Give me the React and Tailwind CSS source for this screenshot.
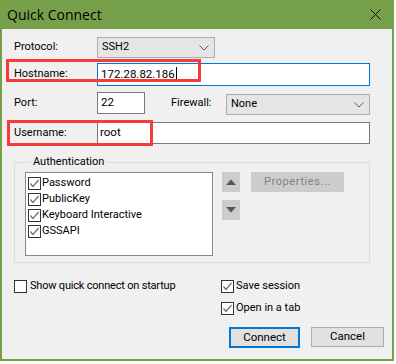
import React from 'react';

const font = { fontFamily: 'Roboto, "Liberation Sans", Arial, sans-serif' };
const titleFont = { fontFamily: '"Open Sans", "Noto Sans", Arial, sans-serif' };

const Chevron = () => (
  <svg width="10" height="6" viewBox="0 0 10 6" className="shrink-0">
    <path d="M0.5 0.5 L5 5 L9.5 0.5" fill="none" stroke="#606060" strokeWidth="1" />
  </svg>
);

const Check = ({ checked }) => (
  <span className="w-[13px] h-[13px] border border-[#333333] bg-white flex items-center justify-center shrink-0">
    {checked && (
      <svg width="11" height="11" viewBox="0 0 11 11">
        <path d="M1.5 5.5 L4 8.5 L9.5 2" fill="none" stroke="#6d6d6d" strokeWidth="1.2" />
      </svg>
    )}
  </span>
);

const Combo = ({ value, className }) => (
  <div className={`h-[21px] bg-[#e5e5e5] border border-[#adadad] flex items-center justify-between pl-[4px] pr-[5px] text-black ${className}`}>
    <span>{value}</span>
    <Chevron />
  </div>
);

const authItems = ['Password', 'PublicKey', 'Keyboard Interactive', 'GSSAPI'];

export default function App() {
  return (
    <div className="w-[396px] h-[364px] bg-white" style={font}>
      <div className="w-[394px] h-[361px] bg-[#77a04b] flex flex-col px-[2px] pb-[2px]">
        <div className="h-[29px] flex items-center justify-between pl-[5px] pr-[11px] text-[14px] text-black" style={titleFont}>
          <span>Quick Connect</span>
          <svg width="11" height="11" viewBox="0 0 11 11">
            <path d="M0.5 0.5 L10.5 10.5 M10.5 0.5 L0.5 10.5" stroke="#111" strokeWidth="1" />
          </svg>
        </div>

        <div className="flex-1 bg-[#f0f0f0] relative text-[11px] text-black">
          {/* red annotation boxes */}
          <div className="absolute left-[4px] top-[30px] w-[195px] h-[23px] border-[3px] border-[#f83a3a] pointer-events-none z-10" />
          <div className="absolute left-[5px] top-[91px] w-[146px] h-[26px] border-[3px] border-[#f83a3a] pointer-events-none z-10" />

          <div className="flex flex-col pl-[12px] pt-[8px]">
            <div className="flex items-center h-[21px]">
              <span className="w-[83px]">Protocol:</span>
              <Combo value="SSH2" className="w-[118px]" />
            </div>

            <div className="flex items-center h-[23px] mt-[5px]">
              <span className="w-[83px]">Hostname:</span>
              <div className="w-[273px] h-[23px] bg-white border border-[#0078d7] flex items-center pl-[3px] text-[11.5px]">
                172.28.82.186
                <span className="w-px h-[15px] bg-black ml-[1px]" />
              </div>
            </div>

            <div className="flex items-start h-[23px] mt-[6px]">
              <span className="w-[83px] h-[22px] flex items-center">Port:</span>
              <div className="w-[48px] h-[22px] bg-white border border-[#7a7a7a] pl-[3px] leading-[18px] text-[11.5px]">22</div>
              <span className="w-[55px] ml-[26px] h-[22px] flex items-center">Firewall:</span>
              <Combo value="None" className="w-[144px] mt-[2px]" />
            </div>

            <div className="flex items-center h-[22px] mt-[7px]">
              <span className="w-[83px]">Username:</span>
              <div className="w-[273px] h-[22px] bg-white border border-[#7a7a7a] flex items-center pl-[2px] text-[11.5px]">root</div>
            </div>

            <fieldset className="w-[356px] mt-[10px] border border-[#dcdcdc] pl-[10px] pb-[6px]">
              <legend className="ml-[5px] px-[3px] leading-[16px]">Authentication</legend>
              <div className="flex items-start mt-[2px]">
                <div className="w-[188px] h-[84px] bg-white border border-[#828790] pt-[2px] pl-[2px]">
                  {authItems.map((item) => (
                    <div key={item} className="flex items-center h-[16px]">
                      <Check checked />
                      <span className="ml-[1px]">{item}</span>
                    </div>
                  ))}
                </div>
                <div className="flex flex-col ml-[9px] gap-[8px]">
                  <div className="w-[18px] h-[20px] bg-[#cccccc] flex items-center justify-center">
                    <svg width="10" height="6" viewBox="0 0 10 6"><path d="M0 6 L5 0.5 L10 6 Z" fill="#555" /></svg>
                  </div>
                  <div className="w-[18px] h-[20px] bg-[#cccccc] flex items-center justify-center">
                    <svg width="10" height="6" viewBox="0 0 10 6"><path d="M0 0 L5 5.5 L10 0 Z" fill="#555" /></svg>
                  </div>
                </div>
                <div className="w-[93px] h-[20px] ml-[11px] bg-[#cccccc] text-[#838383] flex items-center justify-center tracking-[0.6px]">
                  Properties...
                </div>
              </div>
            </fieldset>

            <div className="flex mt-[17px]">
              <div className="w-[207px] flex items-center h-[13px]">
                <Check />
                <span className="ml-[3px] tracking-[-0.2px]">Show quick connect on startup</span>
              </div>
              <div className="flex flex-col gap-[9px]">
                <div className="flex items-center h-[13px]">
                  <Check checked />
                  <span className="ml-[2px]">Save session</span>
                </div>
                <div className="flex items-center h-[13px]">
                  <Check checked />
                  <span className="ml-[2px]">Open in a tab</span>
                </div>
              </div>
            </div>

            <div className="flex justify-end pr-[8px] mt-[12px] gap-[11px]">
              <div className="w-[71px] h-[21px] bg-[#e1e1e1] border-2 border-[#0078d7] flex items-center justify-center text-[11.5px]">Connect</div>
              <div className="w-[73px] h-[20px] bg-[#e1e1e1] border border-[#adadad] flex items-center justify-center text-[11.5px]">Cancel</div>
            </div>
          </div>
        </div>
      </div>
    </div>
  );
}
